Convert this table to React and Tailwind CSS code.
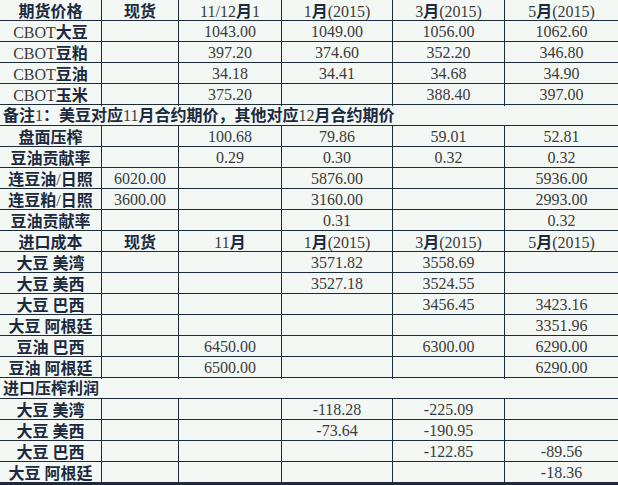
import React from 'react';

const LINE = 'border-[#1d2b3a]';

// 汉字加粗（黑体），数字/字母用衬线体
function Mixed({ text }) {
  const parts = [];
  let buf = '';
  let cjk = null;
  for (const ch of text) {
    const isCjk = ch.charCodeAt(0) > 0x2000;
    if (cjk !== null && isCjk !== cjk) {
      parts.push({ t: buf, cjk });
      buf = '';
    }
    buf += ch;
    cjk = isCjk;
  }
  if (buf) parts.push({ t: buf, cjk });
  return (
    <span className="whitespace-pre">
      {parts.map((p, i) =>
        p.cjk ? (
          <span key={i} className="font-bold text-[#1b2a3e] font-['Noto_Sans_CJK_SC',sans-serif]">
            {p.t}
          </span>
        ) : (
          <span key={i} className="text-[#3b3b3b]">{p.t}</span>
        )
      )}
    </span>
  );
}

const H1 = ['期货价格', '现货', '11/12月1', '1月(2015)', '3月(2015)', '5月(2015)'];
const H2 = ['进口成本', '现货', '11月', '1月(2015)', '3月(2015)', '5月(2015)'];

const rows = [
  { cells: H1 },
  { cells: ['CBOT大豆', '', '1043.00', '1049.00', '1056.00', '1062.60'] },
  { cells: ['CBOT豆粕', '', '397.20', '374.60', '352.20', '346.80'] },
  { cells: ['CBOT豆油', '', '34.18', '34.41', '34.68', '34.90'] },
  { cells: ['CBOT玉米', '', '375.20', '', '388.40', '397.00'] },
  { note: '备注1：美豆对应11月合约期价，其他对应12月合约期价' },
  { cells: ['盘面压榨', '', '100.68', '79.86', '59.01', '52.81'] },
  { cells: ['豆油贡献率', '', '0.29', '0.30', '0.32', '0.32'] },
  { cells: ['连豆油/日照', '6020.00', '', '5876.00', '', '5936.00'] },
  { cells: ['连豆粕/日照', '3600.00', '', '3160.00', '', '2993.00'] },
  { cells: ['豆油贡献率', '', '', '0.31', '', '0.32'] },
  { cells: H2 },
  { cells: ['大豆 美湾', '', '', '3571.82', '3558.69', ''] },
  { cells: ['大豆 美西', '', '', '3527.18', '3524.55', ''] },
  { cells: ['大豆 巴西', '', '', '', '3456.45', '3423.16'] },
  { cells: ['大豆 阿根廷', '', '', '', '', '3351.96'] },
  { cells: ['豆油 巴西', '', '6450.00', '', '6300.00', '6290.00'] },
  { cells: ['豆油 阿根廷', '', '6500.00', '', '', '6290.00'] },
  { note: '进口压榨利润' },
  { cells: ['大豆 美湾', '', '', '-118.28', '-225.09', ''] },
  { cells: ['大豆 美西', '', '', '-73.64', '-190.95', ''] },
  { cells: ['大豆 巴西', '', '', '', '-122.85', '-89.56'] },
  { cells: ['大豆 阿根廷', '', '', '', '', '-18.36'] },
];

export default function App() {
  return (
    <div className="w-[618px] h-[485px] bg-[#f3f8f4] font-['Liberation_Serif','Noto_Sans_CJK_SC',serif] text-[16px] leading-[20px] overflow-hidden">
      {rows.map((row, i) => {
        const last = i === rows.length - 1;
        const rowCls = last
          ? `h-[23px] border-b-[3px] ${LINE}`
          : `h-[21px] border-b ${LINE}`;
        if (row.note) {
          return (
            <div key={i} className={`${rowCls} flex items-center pl-[3px]`}>
              <Mixed text={row.note} />
            </div>
          );
        }
        return (
          <div key={i} className={`${rowCls} grid grid-cols-[102px_77px_103px_111px_112px_113px]`}>
            {row.cells.map((c, j) => (
              <div
                key={j}
                className={`flex items-center justify-center ${j < 5 ? `border-r ${LINE}` : ''}`}
              >
                <Mixed text={c} />
              </div>
            ))}
          </div>
        );
      })}
    </div>
  );
}
